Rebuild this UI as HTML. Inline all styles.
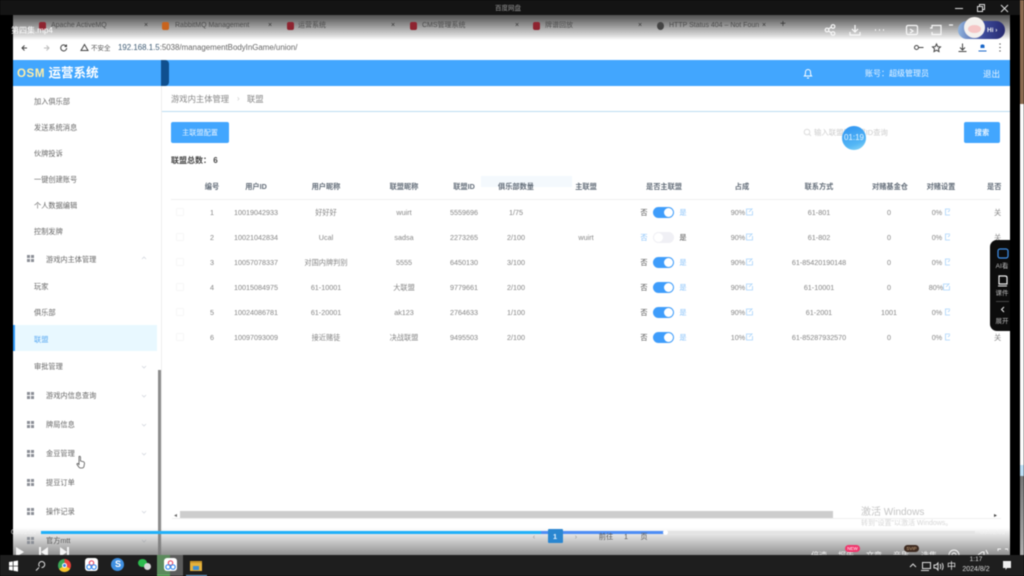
<!DOCTYPE html>
<html lang="zh"><head><meta charset="utf-8"><title>OSM 运营系统</title>
<style>
*{box-sizing:border-box}
html,body{margin:0;padding:0;width:1024px;height:576px;overflow:hidden;background:#000;font-family:"Liberation Sans","Noto Sans CJK SC",sans-serif}
#s{position:relative;width:1024px;height:576px;overflow:hidden;filter:blur(.55px)}
.a{position:absolute}
.c,.l{position:absolute;white-space:nowrap;font-size:7.2px;color:#858585;line-height:10px;height:10px;margin-top:.7px}
.c{transform:translateX(-50%)}
.h{color:#626c78;font-weight:700;font-size:7.2px}
.m{color:#666}
.tab{position:absolute;top:21px;font-size:7px;color:#4d4d4d;white-space:nowrap;line-height:10px}
.x{position:absolute;top:21px;font-size:7px;color:#333;line-height:10px}
.fav{position:absolute;top:22px;width:7px;height:8px;background:#8e2430;border-radius:2px}
.sw{position:absolute;left:653px;width:21px;height:11px;border-radius:6px;background:#3f9dfb}
.sw:after{content:"";position:absolute;right:1px;top:1px;width:9px;height:9px;border-radius:50%;background:#fff}
.off{background:#f0f0f5}.off:after{right:auto;left:1px}
.b{color:#8cc4fa}.d{color:#555}
.g{position:absolute;left:27px;width:7px;height:7px;background:
linear-gradient(#8b8f96,#8b8f96) 0 0/3px 3px no-repeat,linear-gradient(#8b8f96,#8b8f96) 4px 0/3px 3px no-repeat,linear-gradient(#8b8f96,#8b8f96) 0 4px/3px 3px no-repeat,linear-gradient(#8b8f96,#8b8f96) 4px 4px/3px 3px no-repeat}
.ck{position:absolute;left:176px;width:8px;height:8px;border:1px solid #f7f7f7;border-radius:1px}
.ti{position:absolute;width:13px;height:13px;top:558px;border-radius:3px}
</style></head><body><div id="s">
<!-- right strip -->
<div class="a" style="left:1020px;top:0;width:4px;height:104px;background:#8a6a50"></div>
<div class="a" style="left:1020px;top:104px;width:4px;height:372px;background:#fbfbfb"></div>
<div class="a" style="left:1020px;top:465px;width:4px;height:11px;background:#bcdcf2"></div>
<div class="a" style="left:1020px;top:476px;width:4px;height:79px;background:linear-gradient(#777,#aaa)"></div>
<!-- top bar -->
<div class="a" style="left:0;top:0;width:1024px;height:15px;background:#141414"></div>
<div class="a" style="left:1020px;top:0;width:4px;height:15px;background:#8a6a50"></div>
<div class="l" style="left:495px;top:3px;color:#999;font-size:6.5px">百度网盘</div>
<div class="a" style="left:955px;top:8px;width:8px;height:1px;background:#ddd"></div>
<svg class="a" style="left:976px;top:4px" width="10" height="9" fill="none" stroke="#ddd"><rect x="1.500" y="2.500" width="5" height="5"/><path d="M3.500 2.500v-2h5v5h-2"/></svg>
<svg class="a" style="left:1000px;top:4px" width="9" height="9" stroke="#ddd"><path d="M1 1l7 7M8 1l-7 7"/></svg>
<!-- tabstrip -->
<div class="a" style="left:13px;top:15px;width:997px;height:25px;background:linear-gradient(#505050,#9a9a9a 45%,#dfdfdf 85%,#fff)"></div>
<div class="a" style="left:0;top:15px;width:13px;height:25px;background:#000"></div>
<div class="fav" style="left:39px"></div><div class="tab" style="left:51px">Apache ActiveMQ</div><div class="x" style="left:144px">×</div>
<div class="fav" style="left:162px;background:#c8641e"></div><div class="tab" style="left:175px">RabbitMQ Management</div><div class="x" style="left:268px">×</div>
<div class="fav" style="left:287px"></div><div class="tab" style="left:298px">运营系统</div><div class="x" style="left:391px">×</div>
<div class="fav" style="left:410px"></div><div class="tab" style="left:422px">CMS管理系统</div><div class="x" style="left:515px">×</div>
<div class="fav" style="left:533px"></div><div class="tab" style="left:545px">牌谱回放</div><div class="x" style="left:638px">×</div>
<div class="fav" style="left:657px;background:#444;border-radius:50%"></div><div class="tab" style="left:669px">HTTP Status 404 – Not Foun</div><div class="x" style="left:762px">×</div>
<div class="x" style="left:780px;font-size:10px;top:20px">+</div>
<div class="l" style="left:11px;top:25px;color:#fff;font-size:8px">第四集.mp4</div>
<!-- player icons -->
<svg class="a" style="left:824px;top:23px" width="140" height="14" fill="none" stroke="#f8f8f8" stroke-width="1.200">
<circle cx="3" cy="7" r="1.800"/><circle cx="9" cy="3.500" r="1.800"/><circle cx="9" cy="10.500" r="1.800"/><path d="M4.500 6l3-2M4.500 8l3 2"/>
<path d="M31 2v7M28 6l3 3 3-3M26 9v3h10V9"/>
<path d="M51 7h1M55 7h1M59 7h1" stroke-width="1.500"/>
<rect x="82.500" y="2.500" width="11" height="9" rx="1.500"/><path d="M86 6l3 2-3 2"/>
<path d="M106 5h2V2.500h9v9h-9V9"/><path d="M125 2h4"/>
</svg>
<!-- Hi pill -->
<div class="a" style="left:958px;top:21px;width:47px;height:18px;border-radius:9px;background:linear-gradient(90deg,#8fb2dc,#3c4a9a 55%,#26296e)"></div>
<div class="l" style="left:987px;top:25px;color:#eee;font-size:6.5px;font-weight:700">Hi ›</div>
<div class="a" style="left:964px;top:17px;width:21px;height:21px;border-radius:50%;background:#f4f1ee"></div>
<div class="a" style="left:968px;top:25px;width:13px;height:8px;border-radius:50%;background:#f5c6c6"></div>
<!-- address bar -->
<div class="a" style="left:13px;top:40px;width:997px;height:20px;background:#fff"></div>
<svg class="a" style="left:20px;top:43px" width="50" height="10" fill="none" stroke="#444"><path d="M7 5H2M4.500 2.500L2 5l2.500 2.500"/><path stroke="#bbb" d="M24 5h5M26.500 2.500L29 5l-2.500 2.500"/><path d="M46 3a3 3 0 1 0 .7 2M46.500 1.500V3.500H44.500"/></svg>
<svg class="a" style="left:80px;top:43px" width="9" height="9" fill="none" stroke="#444"><path d="M4.500 1.500L8 7.500H1z"/></svg>
<div class="l" style="left:91px;top:43px;font-size:6.5px;color:#555">不安全</div>
<div class="l" style="left:118px;top:42.500px;font-size:7.900px;color:#3d5a73">192.168.1.5<span style="color:#666">:5038/managementBodyInGame/union/</span></div>
<svg class="a" style="left:913px;top:42px" width="90" height="12" fill="none" stroke="#444"><circle cx="3.500" cy="5.500" r="2"/><path d="M5.500 5.500h5"/><path d="M23.500 2l1.200 2.600 2.800.3-2 1.900.5 2.800-2.500-1.400-2.500 1.400.5-2.800-2-1.900 2.800-.3z"/><path d="M49.500 1.500v6M47 5.500l2.500 2.500 2.500-2.500M45.500 9.500h8"/><path d="M68 3.500a2 2 0 0 1 3 0v2h-3zM65.500 9h8" fill="#1a67c8" stroke="#1a67c8"/><path d="M87 1.500v1M87 5v1M87 8.500v1" stroke-width="1.300"/></svg>
<!-- blue header -->
<div class="a" style="left:13px;top:60px;width:997px;height:26px;background:#42a6fe"></div>
<div class="a" style="left:161px;top:60px;width:8px;height:26px;background:#10508f;border-radius:0 4px 4px 0"></div>
<div class="l" style="left:17px;top:65.500px;height:14px;line-height:14px;font-size:12.500px;font-weight:700;color:#fff"><span style="color:#ffeea8;font-size:11.500px;letter-spacing:.6px">OSM</span> 运营系统</div>
<svg class="a" style="left:802px;top:67px" width="12" height="12" fill="none" stroke="#fff"><path d="M2.500 9c1-1 1-2 1-4a2.500 2.500 0 0 1 5 0c0 2 0 3 1 4zM5 11h2"/></svg>
<div class="l" style="left:865px;top:68px;font-size:8px;color:#e8f4ff">账号：超级管理员</div>
<div class="l" style="left:983px;top:68px;font-size:8.500px;color:#e8f4ff">退出</div>
<!-- page -->
<div class="a" style="left:13px;top:86px;width:997px;height:470px;background:#fff"></div>
<div class="a" style="left:161px;top:86px;width:1px;height:470px;background:#eee"></div>
<div class="a" style="left:162px;top:111px;width:848px;height:1px;background:#bcdcf2"></div>
<div class="l" style="left:171px;top:93.500px;font-size:8.300px;color:#888">游戏内主体管理</div>
<div class="l" style="left:237px;top:93.500px;font-size:8px;color:#ccc">›</div>
<div class="l" style="left:247px;top:93.500px;font-size:8.300px;color:#888">联盟</div>
<!-- sidebar -->
<div class="l m" style="left:34px;top:96px">加入俱乐部</div>
<div class="l m" style="left:34px;top:122px">发送系统消息</div>
<div class="l m" style="left:34px;top:148px">伙牌投诉</div>
<div class="l m" style="left:34px;top:174px">一键创建账号</div>
<div class="l m" style="left:34px;top:200px">个人数据编辑</div>
<div class="l m" style="left:34px;top:226px">控制发牌</div>
<div class="g" style="top:255px"></div><div class="l m" style="left:46px;top:254px">游戏内主体管理</div>
<div class="l m" style="left:34px;top:281px">玩家</div>
<div class="l m" style="left:34px;top:307px">俱乐部</div>
<div class="a" style="left:13px;top:325px;width:144px;height:26px;background:#e8f8ff"></div>
<div class="a" style="left:13px;top:325px;width:2px;height:26px;background:#2f9bfa"></div>
<div class="l" style="left:34px;top:334px;color:#5aa9f2">联盟</div>
<div class="l m" style="left:34px;top:361px">审批管理</div>
<div class="g" style="top:392px"></div><div class="l m" style="left:46px;top:390px">游戏内信息查询</div>
<div class="g" style="top:421px"></div><div class="l m" style="left:46px;top:419px">牌局信息</div>
<div class="g" style="top:450px"></div><div class="l m" style="left:46px;top:448px">金豆管理</div>
<div class="g" style="top:479px"></div><div class="l m" style="left:46px;top:477px">提豆订单</div>
<div class="g" style="top:508px"></div><div class="l m" style="left:46px;top:506px">操作记录</div>
<svg class="a" style="left:141px;top:255px" width="6" height="290" fill="none" stroke="#d4d8de" stroke-width=".8"><path d="M1 4l2-2 2 2M1 111l2 2 2-2M1 140l2 2 2-2M1 169l2 2 2-2M1 198l2 2 2-2M1 256l2 2 2-2M1 285l2 2 2-2"/></svg>
<div class="a" style="left:158px;top:370px;width:3px;height:186px;background:#8c8c8c"></div>
<svg class="a" style="left:76px;top:455px" width="10" height="14" fill="#fff" stroke="#555" stroke-width=".8"><path d="M3 1.500c.8-.6 1.500 0 1.500.8v3.700l3 .8c.8.3 1 .8 1 1.500l-.5 3c-.2 1-.8 1.700-2 1.700H4.500c-.8 0-1.300-.4-1.700-1L1 9.500c-.4-.7.400-1.400 1.200-.8l.8.800z"/></svg>
<!-- toolbar -->
<div class="a" style="left:171px;top:122px;width:58px;height:21px;background:#42a6fe;border-radius:2px"></div>
<div class="c" style="left:200px;top:127px;color:#e8f4ff">主联盟配置</div>
<div class="a" style="left:964px;top:122px;width:36px;height:21px;background:#42a6fe;border-radius:2px"></div>
<div class="c" style="left:982px;top:127px;color:#e8f4ff;font-weight:700">搜索</div>
<svg class="a" style="left:803px;top:128px" width="9" height="9" fill="none" stroke="#ddd"><circle cx="4" cy="4" r="2.800"/><path d="M6 6l2 2"/></svg>
<div class="l" style="left:814px;top:127px;color:#ccc;font-size:7.400px">输入联盟昵称或ID查询</div>
<div class="a" style="left:842px;top:126px;width:24px;height:24px;border-radius:50%;background:linear-gradient(160deg,#2f93f2,#53b6f5 70%,#8fd9f7)"></div>
<div class="c" style="left:854px;top:132.500px;color:#e6f4ff;font-size:8px">01:19</div>
<div class="l" style="left:171px;top:155px;font-size:8px;color:#444;font-weight:700">联盟总数： 6</div>
<!-- table head -->
<div class="a" style="left:481px;top:176px;width:91px;height:11px;background:#f4f9fd"></div>
<div class="a" style="left:171px;top:199px;width:829px;height:1px;background:#f0f0f0"></div>
<div class="c h" style="left:212px;top:181px">编号</div>
<div class="c h" style="left:256px;top:181px">用户ID</div>
<div class="c h" style="left:326px;top:181px">用户昵称</div>
<div class="c h" style="left:404px;top:181px">联盟昵称</div>
<div class="c h" style="left:464px;top:181px">联盟ID</div>
<div class="c h" style="left:516px;top:181px">俱乐部数量</div>
<div class="c h" style="left:586px;top:181px">主联盟</div>
<div class="c h" style="left:664px;top:181px">是否主联盟</div>
<div class="c h" style="left:742px;top:181px">占成</div>
<div class="c h" style="left:819px;top:181px">联系方式</div>
<div class="c h" style="left:890px;top:181px">对赌基金仓</div>
<div class="c h" style="left:941px;top:181px">对赌设置</div>
<div class="l h" style="left:987px;top:181px">是否</div>
<!-- rows -->
<div class="ck" style="top:208px"></div><div class="ck" style="top:233px"></div><div class="ck" style="top:258px"></div><div class="ck" style="top:283px"></div><div class="ck" style="top:308px"></div><div class="ck" style="top:333px"></div>

<div class="c" style="left:212px;top:207px">1</div><div class="c" style="left:256px;top:207px">10019042933</div><div class="c" style="left:326px;top:207px">好好好</div><div class="c" style="left:404px;top:207px">wuirt</div><div class="c" style="left:464px;top:207px">5559696</div><div class="c" style="left:516px;top:207px">1/75</div>
<div class="c d" style="left:644px;top:207px">否</div><div class="sw" style="top:207px"></div><div class="c b" style="left:683px;top:207px">是</div><div class="c" style="left:738px;top:207px">90%</div><div class="c" style="left:819px;top:207px">61-801</div><div class="c" style="left:889px;top:207px">0</div><div class="c" style="left:937px;top:207px">0%</div><div class="l" style="left:994px;top:207px">关</div>

<div class="c" style="left:212px;top:232px">2</div><div class="c" style="left:256px;top:232px">10021042834</div><div class="c" style="left:326px;top:232px">Ucal</div><div class="c" style="left:404px;top:232px">sadsa</div><div class="c" style="left:464px;top:232px">2273265</div><div class="c" style="left:516px;top:232px">2/100</div><div class="c" style="left:586px;top:232px">wuirt</div>
<div class="c b" style="left:644px;top:232px">否</div><div class="sw off" style="top:232px"></div><div class="c d" style="left:683px;top:232px">是</div><div class="c" style="left:738px;top:232px">90%</div><div class="c" style="left:819px;top:232px">61-802</div><div class="c" style="left:889px;top:232px">0</div><div class="c" style="left:937px;top:232px">0%</div><div class="l" style="left:994px;top:232px">关</div>

<div class="c" style="left:212px;top:257px">3</div><div class="c" style="left:256px;top:257px">10057078337</div><div class="c" style="left:326px;top:257px">对国内牌判别</div><div class="c" style="left:404px;top:257px">5555</div><div class="c" style="left:464px;top:257px">6450130</div><div class="c" style="left:516px;top:257px">3/100</div>
<div class="c d" style="left:644px;top:257px">否</div><div class="sw" style="top:257px"></div><div class="c b" style="left:683px;top:257px">是</div><div class="c" style="left:738px;top:257px">90%</div><div class="c" style="left:819px;top:257px">61-85420190148</div><div class="c" style="left:889px;top:257px">0</div><div class="c" style="left:937px;top:257px">0%</div>

<div class="c" style="left:212px;top:282px">4</div><div class="c" style="left:256px;top:282px">10015084975</div><div class="c" style="left:326px;top:282px">61-10001</div><div class="c" style="left:404px;top:282px">大联盟</div><div class="c" style="left:464px;top:282px">9779661</div><div class="c" style="left:516px;top:282px">2/100</div>
<div class="c d" style="left:644px;top:282px">否</div><div class="sw" style="top:282px"></div><div class="c b" style="left:683px;top:282px">是</div><div class="c" style="left:738px;top:282px">90%</div><div class="c" style="left:819px;top:282px">61-10001</div><div class="c" style="left:889px;top:282px">0</div><div class="c" style="left:936px;top:282px">80%</div>

<div class="c" style="left:212px;top:307px">5</div><div class="c" style="left:256px;top:307px">10024086781</div><div class="c" style="left:326px;top:307px">61-20001</div><div class="c" style="left:404px;top:307px">ak123</div><div class="c" style="left:464px;top:307px">2764633</div><div class="c" style="left:516px;top:307px">1/100</div>
<div class="c d" style="left:644px;top:307px">否</div><div class="sw" style="top:307px"></div><div class="c b" style="left:683px;top:307px">是</div><div class="c" style="left:738px;top:307px">90%</div><div class="c" style="left:819px;top:307px">61-2001</div><div class="c" style="left:889px;top:307px">1001</div><div class="c" style="left:937px;top:307px">0%</div>

<div class="c" style="left:212px;top:332px">6</div><div class="c" style="left:256px;top:332px">10097093009</div><div class="c" style="left:326px;top:332px">接近赌徒</div><div class="c" style="left:404px;top:332px">决战联盟</div><div class="c" style="left:464px;top:332px">9495503</div><div class="c" style="left:516px;top:332px">2/100</div>
<div class="c d" style="left:644px;top:332px">否</div><div class="sw" style="top:332px"></div><div class="c b" style="left:683px;top:332px">是</div><div class="c" style="left:738px;top:332px">10%</div><div class="c" style="left:819px;top:332px">61-85287932570</div><div class="c" style="left:889px;top:332px">0</div><div class="c" style="left:937px;top:332px">0%</div><div class="l" style="left:994px;top:332px">关</div>

<svg class="a" style="left:746px;top:208px" width="204" height="134" fill="none" stroke="#a9d3fa" stroke-width=".8">
<path d="M6 1H.500v6h6V3M3 4l3.500-3.500"/><path transform="translate(199 0)" d="M6 1H.500v6h6V3M3 4l3.500-3.500"/>
<path transform="translate(0 25)" d="M6 1H.500v6h6V3M3 4l3.500-3.500"/><path transform="translate(199 25)" d="M6 1H.500v6h6V3M3 4l3.500-3.500"/>
<path transform="translate(0 50)" d="M6 1H.500v6h6V3M3 4l3.500-3.500"/><path transform="translate(199 50)" d="M6 1H.500v6h6V3M3 4l3.500-3.500"/>
<path transform="translate(0 75)" d="M6 1H.500v6h6V3M3 4l3.500-3.500"/><path transform="translate(197 75)" d="M6 1H.500v6h6V3M3 4l3.500-3.500"/>
<path transform="translate(0 100)" d="M6 1H.500v6h6V3M3 4l3.500-3.500"/><path transform="translate(199 100)" d="M6 1H.500v6h6V3M3 4l3.500-3.500"/>
<path transform="translate(0 125)" d="M6 1H.500v6h6V3M3 4l3.500-3.500"/><path transform="translate(199 125)" d="M6 1H.500v6h6V3M3 4l3.500-3.500"/>
</svg>
<!-- side panel -->
<div class="a" style="left:990px;top:240px;width:30px;height:91px;background:#0c0c0c;border-radius:7px 0 0 7px"></div>
<div class="a" style="left:1010px;top:15px;width:10px;height:540px;background:#000"></div>
<svg class="a" style="left:997px;top:248px" width="13" height="66" fill="none"><rect x="1" y="1" width="10" height="9" rx="2" stroke="#3f8fe8" stroke-width="1.200"/><path d="M2 28h6c1 0 2 .5 2 1.500V36H2z" stroke="#eee" stroke-width="1.200"/><path d="M1 38h9" stroke="#eee"/><path d="M7 59l-2.500 2.500L7 64" stroke="#eee"/></svg>
<div class="c" style="left:1002px;top:261px;color:#bbb;font-size:6.500px">AI看</div>
<div class="c" style="left:1002px;top:288px;color:#bbb;font-size:6.500px">课件</div>
<div class="a" style="left:996px;top:301px;width:13px;height:1px;background:#444"></div>
<div class="c" style="left:1002px;top:316px;color:#bbb;font-size:6.500px">展开</div>
<!-- h scroll -->
<div class="a" style="left:180px;top:511px;width:653px;height:7px;background:#cdcdcd"></div>
<div class="a" style="left:172px;top:518px;width:829px;height:1px;background:#efefef"></div>
<div class="l" style="left:174px;top:510px;font-size:6px;color:#666">◂</div>
<div class="l" style="left:994px;top:510px;font-size:6px;color:#444">▸</div>
<div class="l" style="left:861px;top:505.500px;font-size:10px;height:13px;line-height:13px;color:#c4c4c4">激活 Windows</div>
<div class="l" style="left:861px;top:518px;font-size:7px;color:#d6d6d6">转到"设置"以激活 Windows。</div>
<!-- bottom gradient -->
<div class="a" style="left:13px;top:528px;width:997px;height:28px;background:linear-gradient(rgba(255,255,255,0),rgba(120,120,120,.85))"></div>
<div class="g" style="top:537px"></div>
<div class="l" style="left:46px;top:535px;color:#555">官方mtt</div>
<div class="a" style="left:41px;top:531px;width:500px;height:3px;background:#1fb0f8"></div>
<div class="a" style="left:541px;top:531px;width:124px;height:3px;background:#4d8df5"></div>
<div class="a" style="left:665px;top:531px;width:310px;height:3px;background:#e4e4e4"></div>
<div class="a" style="left:663px;top:530px;width:5px;height:5px;border-radius:50%;background:#fff"></div>
<div class="l" style="left:11px;top:527.500px;color:#f2f2f2;font-size:6.500px">00:01:21</div>
<div class="l" style="left:980px;top:527.500px;color:#f2f2f2;font-size:6.500px">00:02:01</div>
<div class="a" style="left:548px;top:529px;width:15px;height:14px;background:#2a86d0;border-radius:1px"></div>
<div class="c" style="left:555px;top:531px;color:#e8f4ff;font-weight:700">1</div>
<div class="c" style="left:534px;top:531px;color:#999">‹</div><div class="c" style="left:576px;top:531px;color:#999">›</div>
<div class="c" style="left:606px;top:531px;color:#555">前往</div><div class="c" style="left:626px;top:531px;color:#555">1</div><div class="c" style="left:644px;top:531px;color:#555">页</div>
<svg class="a" style="left:16px;top:545px" width="60" height="11" fill="#f4f4f4"><path d="M0 2l8 5-8 5z"/><path d="M23 2h2v10h-2zM32 2v10l-7-5z"/><path d="M44 2l7 5-7 5zM51 2h2v10h-2z"/></svg>
<div class="c" style="left:819px;top:550px;color:#f2f2f2;font-size:8px">倍速</div>
<div class="c" style="left:846px;top:550px;color:#f2f2f2;font-size:8px">报告</div>
<div class="c" style="left:874px;top:550px;color:#f2f2f2;font-size:8px">文章</div>
<div class="c" style="left:901px;top:550px;color:#f2f2f2;font-size:8px">音质</div>
<div class="c" style="left:929px;top:550px;color:#f2f2f2;font-size:8px">选集</div>
<div class="a" style="left:845px;top:545px;width:15px;height:7px;border-radius:4px;background:#f0356b;color:#fff;font-size:4.500px;line-height:7px;text-align:center">NEW</div>
<div class="a" style="left:904px;top:545px;width:15px;height:7px;border-radius:4px;background:#3d2a20;color:#d8b48a;font-size:4.500px;line-height:7px;text-align:center">SVIP</div>
<svg class="a" style="left:948px;top:548px" width="60" height="8" fill="none" stroke="#f4f4f4"><circle cx="6" cy="7" r="5"/><circle cx="6" cy="7" r="2"/><path d="M30 7l4-3h2v4M38 2l2 4"/><path d="M50 3V1h3M57 1h3v2"/></svg>
<!-- taskbar -->
<div class="a" style="left:0;top:555px;width:1024px;height:21px;background:#1e1e1e"></div>
<svg class="a" style="left:8px;top:560px" width="40" height="12"><path fill="#fff" d="M1 2l3.800-.6v4.300H1zM5.500 1.300L10 .5v5.200H5.500zM1 6.400h3.800v4.200L1 10zM5.500 6.400H10v5.200l-4.500-.8z"/><path fill="none" stroke="#ddd" d="M31.500 6.500a3 3 0 1 1 2 1M28 10.500l3-3"/></svg>
<div class="a" style="left:58px;top:559px;width:13px;height:13px;border-radius:50%;background:conic-gradient(#e6413a 0 33%,#f7c52d 33% 66%,#3aa757 66%)"></div>
<div class="a" style="left:62px;top:563px;width:5px;height:5px;border-radius:50%;background:#3b82e8;border:1px solid #fff"></div>
<div class="ti" style="left:85px;background:#fff"></div>
<svg class="a" style="left:86px;top:560px" width="11" height="10" fill="none" stroke-width="1.200"><circle cx="5.500" cy="3" r="2.200" stroke="#e8506a"/><circle cx="3" cy="7" r="2.200" stroke="#3a8ef0"/><circle cx="8" cy="7" r="2.200" stroke="#3a8ef0"/></svg>
<div class="a" style="left:111px;top:558px;width:13px;height:13px;border-radius:50%;background:#3f8fe0"></div>
<div class="l" style="left:115px;top:558.500px;color:#fff;font-size:9px;font-weight:700">S</div>
<div class="a" style="left:138px;top:559px;width:9px;height:8px;border-radius:50%;background:#2dbb4e"></div>
<div class="a" style="left:144px;top:563px;width:7px;height:7px;border-radius:50%;background:#d8d8d8"></div>
<div class="a" style="left:157px;top:555px;width:26px;height:21px;background:#5c5c5c"></div>
<div class="a" style="left:157px;top:555px;width:13px;height:21px;background:#5b8a5c"></div>
<div class="a" style="left:157px;top:575px;width:13px;height:1px;background:#6fd36f"></div>
<div class="ti" style="left:164px;background:#fff"></div>
<svg class="a" style="left:165px;top:560px" width="11" height="10" fill="none" stroke-width="1.200"><circle cx="5.500" cy="3" r="2.200" stroke="#e8506a"/><circle cx="3" cy="7" r="2.200" stroke="#3a8ef0"/><circle cx="8" cy="7" r="2.200" stroke="#3a8ef0"/></svg>
<div class="a" style="left:190px;top:561px;width:12px;height:10px;background:#e6b23c;border-top:2px solid #c9962a"></div>
<div class="a" style="left:193px;top:566px;width:6px;height:4px;background:#3f8fd0"></div>
<div class="a" style="left:186px;top:575px;width:21px;height:1px;background:#7ab8ea"></div>
<svg class="a" style="left:909px;top:561px" width="36" height="11" fill="none" stroke="#ddd"><path d="M1 6l3-3 3 3"/><rect x="13.500" y="1.500" width="8" height="6"/><path d="M12 9.500h8"/><path d="M25 4h2l2-2v7l-2-2h-2zM31 3c1 1 1 4 0 5M33 2c1.500 2 1.500 5 0 7"/></svg>
<div class="l" style="left:947px;top:558px;height:14px;line-height:14px;color:#eee;font-size:9px">中</div>
<div class="c" style="left:976px;top:554.500px;color:#ddd;font-size:6.500px">1:17</div>
<div class="c" style="left:976px;top:564.500px;color:#ddd;font-size:7px">2024/8/2</div>
<svg class="a" style="left:1002px;top:560px" width="11" height="11" fill="#eee"><path d="M1 1h8v7H5l-1.500 2V8H1z"/></svg>
</div></body></html>
